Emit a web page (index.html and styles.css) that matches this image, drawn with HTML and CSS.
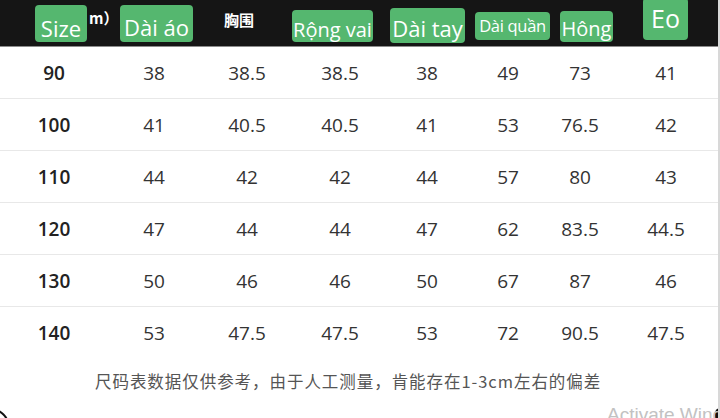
FILE: index.html
```html
<!DOCTYPE html>
<html lang="vi">
<head>
<meta charset="utf-8">
<title>Size chart</title>
<link rel="stylesheet" href="styles.css">
</head>
<body>
<div class="page">
  <div class="head">
    <div class="badge b-size">Size</div>
    <div class="unit">m）</div>
    <div class="badge b-daiao">Dài áo</div>
    <div class="cn">胸围</div>
    <div class="badge b-rong"><span>Rộng vai</span></div>
    <div class="badge b-daitay">Dài tay</div>
    <div class="badge b-quan">Dài quần</div>
    <div class="badge b-hong">Hông</div>
    <div class="badge b-eo">Eo</div>
  </div>
  <div class="table">
    <div class="row"><span class="sz">90</span><span>38</span><span>38.5</span><span>38.5</span><span>38</span><span>49</span><span>73</span><span>41</span></div>
    <div class="row"><span class="sz">100</span><span>41</span><span>40.5</span><span>40.5</span><span>41</span><span>53</span><span>76.5</span><span>42</span></div>
    <div class="row"><span class="sz">110</span><span>44</span><span>42</span><span>42</span><span>44</span><span>57</span><span>80</span><span>43</span></div>
    <div class="row"><span class="sz">120</span><span>47</span><span>44</span><span>44</span><span>47</span><span>62</span><span>83.5</span><span>44.5</span></div>
    <div class="row"><span class="sz">130</span><span>50</span><span>46</span><span>46</span><span>50</span><span>67</span><span>87</span><span>46</span></div>
    <div class="row last"><span class="sz">140</span><span>53</span><span>47.5</span><span>47.5</span><span>53</span><span>72</span><span>90.5</span><span>47.5</span></div>
  </div>
  <div class="note">尺码表数据仅供参考，由于人工测量，肯能存在1-3cm左右的偏差</div>
  <div class="corner-bl"></div>
  <div class="corner-br"></div>
  <div class="watermark">Activate Windows</div>
</div>
</body>
</html>
```

FILE: styles.css
```css
* { box-sizing: border-box; }
html, body { margin: 0; padding: 0; background: #fff; }
.page {
  position: relative;
  width: 720px;
  height: 418px;
  overflow: hidden;
  background: #fff;
  font-family: "Open Sans", "Noto Sans", "Noto Sans CJK SC", sans-serif;
  border-right: 2px solid #d8d8d8;
}
.head {
  display: flex;
  align-items: flex-start;
  height: 47px;
  padding-left: 35px;
  background: #151515;
  border-bottom: 1px solid #8c8c8c;
  overflow: hidden;
}
.badge {
  display: flex;
  align-items: center;
  justify-content: center;
  background: #55b76f;
  color: #fff;
  border-radius: 4px;
  white-space: nowrap;
  font-family: "Open Sans", sans-serif;
  line-height: 1;
}
.b-size { width: 52px; height: 37px; margin-top: 5px; font-size: 22px; padding-top: 8px; }
.unit {
  width: 23px; margin-left: 2px; margin-top: 8px;
  color: #fff; font-size: 15px; font-weight: 700; line-height: 20px;
  font-family: "Noto Sans CJK SC", "Open Sans", sans-serif;
}
.b-daiao { width: 73px; height: 37px; margin-left: 8px; margin-top: 5px; font-size: 22px; padding-top: 6px; }
.cn {
  width: 34px; margin-left: 31px; margin-top: 10px;
  color: #fff; font-size: 15px; font-weight: 700; line-height: 20px;
  font-family: "Noto Sans CJK SC", sans-serif;
}
.b-rong {
  width: 81px; height: 32px; margin-left: 34px; margin-top: 10px;
  font-size: 20px; overflow: hidden; align-items: flex-end;
}
.b-rong span { display: block; line-height: 26px; margin-bottom: -1px; }
.b-daitay { width: 75px; height: 35px; margin-left: 17px; margin-top: 8px; font-size: 22px; padding-top: 4px; }
.b-quan { width: 75px; height: 28px; margin-left: 10px; margin-top: 12px; font-size: 16.5px; letter-spacing: -0.3px; }
.b-hong { width: 53px; height: 31px; margin-left: 10px; margin-top: 11px; font-size: 20px; padding-top: 4px; }
.b-eo { width: 45px; height: 42px; margin-left: 30px; margin-top: -2px; font-size: 25px; padding-bottom: 2px; }

.table { display: flex; flex-direction: column; }
.row {
  display: grid;
  grid-template-columns: 110px 88px 98px 88px 86px 76px 68px 104px;
  height: 52px;
  align-items: center;
  border-bottom: 1px solid #e8e8e8;
  color: #333;
  font-size: 19px;
}
.row.last { border-bottom: none; }
.row span { text-align: center; }
.row .sz { font-weight: 600; color: #222; padding-right: 2px; }
.note {
  padding-top: 12px;
  padding-left: 95px;
  font-family: "Noto Sans CJK SC", sans-serif;
  font-size: 16.5px;
  letter-spacing: 0.95px;
  color: #555;
  line-height: 20px;
  white-space: nowrap;
}
.corner-bl {
  position: absolute;
  left: -30px;
  top: 408px;
  width: 40px;
  height: 40px;
  border: 2px solid #111;
  border-radius: 50%;
}
.corner-br {
  position: absolute;
  right: -2px;
  top: 408px;
  width: 5px;
  height: 14px;
  background: #111;
  border-top-left-radius: 5px;
}
.watermark {
  position: absolute;
  left: 607px;
  top: 404px;
  font-family: "Liberation Sans", sans-serif;
  font-size: 19px;
  color: #c2c2c2;
  white-space: nowrap;
}
```
